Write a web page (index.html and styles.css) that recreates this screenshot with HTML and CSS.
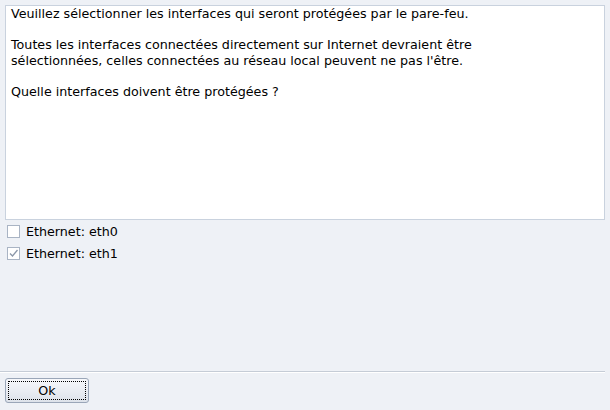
FILE: index.html
```html
<!DOCTYPE html>
<html lang="fr">
<head>
    <meta charset="UTF-8">
    <title>Pare-feu</title>
    <link rel="stylesheet" href="styles.css">
</head>
<body>
    <div class="dialog">
        <div class="message">
            <p>Veuillez sélectionner les interfaces qui seront protégées par le pare-feu.</p>
            <p>Toutes les interfaces connectées directement sur Internet devraient être<br>sélectionnées, celles connectées au réseau local peuvent ne pas l'être.</p>
            <p>Quelle interfaces doivent être protégées ?</p>
        </div>

        <label class="option">
            <input type="checkbox">
            <span class="box"></span>
            Ethernet: eth0
        </label>
        <label class="option">
            <input type="checkbox" checked>
            <span class="box">
                <svg width="11" height="11" viewBox="0 0 11 11"><path d="M2 5.5 L4.5 8 L9.5 2" fill="none" stroke="#8a96a8" stroke-width="1.3"/></svg>
            </span>
            Ethernet: eth1
        </label>

        <div class="spacer"></div>
        <div class="separator"></div>
        <div class="buttons">
            <button class="ok">Ok</button>
        </div>
    </div>
</body>
</html>
```

FILE: styles.css
```css
html, body {
    margin: 0;
    height: 100%;
}
body {
    background: #eef1f6;
    font-family: "DejaVu Sans", Verdana, sans-serif;
    font-size: 12.7px;
    color: #000;
}
.dialog {
    display: flex;
    flex-direction: column;
    height: 100%;
    box-sizing: border-box;
    padding: 5px 5px 7px 5px;
}
.message {
    background: #fff;
    border: 1px solid #c9d2de;
    height: 215px;
    box-sizing: border-box;
    padding: 0 5px;
}
.message p {
    margin: 0 0 15.5px 0;
    line-height: 15.5px;
}
.option {
    display: flex;
    align-items: center;
    gap: 6px;
    height: 22px;
    padding-left: 2px;
}
.option input {
    display: none;
}
.box {
    width: 11px;
    height: 11px;
    border: 1px solid #a9b4c4;
    background: #fff;
    display: inline-flex;
    align-items: center;
    justify-content: center;
}
.box svg {
    display: block;
}
.spacer {
    flex: 1;
}
.separator {
    border-top: 1px solid #c5ccd6;
    border-bottom: 1px solid #fff;
    margin: 0 0 5px -5px;
}
.buttons {
    display: flex;
}
.ok {
    width: 84px;
    height: 25px;
    font-family: "DejaVu Sans", Verdana, sans-serif;
    font-size: 12.7px;
    color: #000;
    border: 1px solid #9aa6b8;
    border-radius: 3px;
    background: linear-gradient(#f7f8fb, #dde2ea);
    outline: 1px dotted #000;
    outline-offset: -4px;
    padding: 0;
}
```
